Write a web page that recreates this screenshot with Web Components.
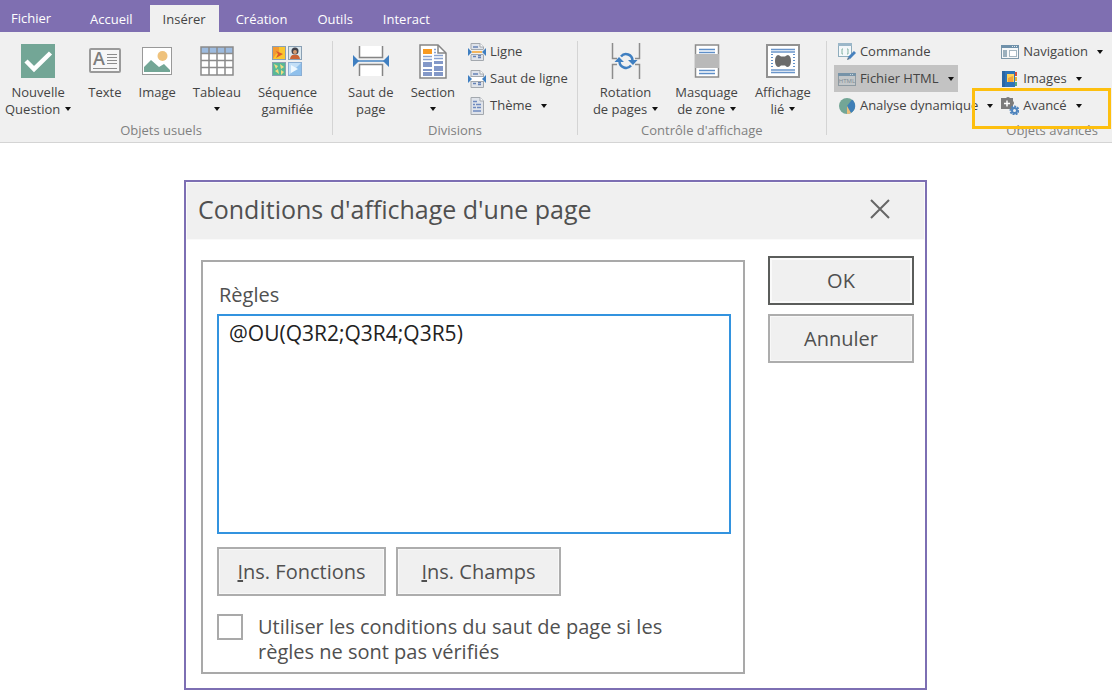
<!DOCTYPE html>
<html lang="fr">
<head>
  <meta charset="utf-8">
  <title>Conditions d'affichage</title>
  <style>
    body {
      margin: 0;
      overflow-x: hidden;
      background: #fff;
      color: #444;
      font: 13px/17px "Open Sans", "Noto Sans", sans-serif;
    }

    main {
      padding: 37px 17px 0 16px;
    }
  </style>
</head>
<body>
  <ribbon-tabs>
    <ribbon-tab file>Fichier</ribbon-tab>
    <ribbon-tab>Accueil</ribbon-tab>
    <ribbon-tab selected>Insérer</ribbon-tab>
    <ribbon-tab>Création</ribbon-tab>
    <ribbon-tab>Outils</ribbon-tab>
    <ribbon-tab>Interact</ribbon-tab>
  </ribbon-tabs>

  <ribbon-bar>
    <ribbon-group label="Objets usuels" first>
      <ribbon-button icon="question" menu>Nouvelle<br>Question</ribbon-button>
      <ribbon-button icon="text">Texte</ribbon-button>
      <ribbon-button icon="image">Image</ribbon-button>
      <ribbon-button icon="table" menu="below">Tableau</ribbon-button>
      <ribbon-button icon="sequence">Séquence<br>gamifiée</ribbon-button>
    </ribbon-group>
    <ribbon-group label="Divisions">
      <ribbon-button icon="page-break">Saut de<br>page</ribbon-button>
      <ribbon-button icon="section" menu="below">Section</ribbon-button>
      <ribbon-stack>
        <ribbon-button small icon="line">Ligne</ribbon-button>
        <ribbon-button small icon="line-break">Saut de ligne</ribbon-button>
        <ribbon-button small icon="theme" menu>Thème</ribbon-button>
      </ribbon-stack>
    </ribbon-group>
    <ribbon-group label="Contrôle d'affichage">
      <ribbon-button icon="rotation" menu>Rotation<br>de pages</ribbon-button>
      <ribbon-button icon="mask" menu>Masquage<br>de zone</ribbon-button>
      <ribbon-button icon="linked" menu>Affichage<br>lié</ribbon-button>
    </ribbon-group>
    <ribbon-group open-end>
      <ribbon-stack>
        <ribbon-button small icon="command">Commande</ribbon-button>
        <ribbon-button small icon="html" menu active>Fichier HTML</ribbon-button>
        <ribbon-button small icon="analysis" menu>Analyse dynamique</ribbon-button>
      </ribbon-stack>
    </ribbon-group>
    <ribbon-group label="Objets avancés" last>
      <ribbon-stack>
        <ribbon-button small icon="navigation" menu>Navigation</ribbon-button>
        <ribbon-button small icon="book" menu>Images</ribbon-button>
        <ribbon-button small icon="advanced" menu framed>Avancé</ribbon-button>
      </ribbon-stack>
    </ribbon-group>
  </ribbon-bar>

  <main>
    <conditions-dialog>Conditions d'affichage d'une page</conditions-dialog>
  </main>

  <script>
    // Page outline with a folded corner, shared by the 18px icons
    const SMALL_PAGE = `
      <path d="M3 .5h9l3.500 3.500v13.500H3z" fill="#dfe3ea" stroke="#a3a8ae"/>
      <path d="M12 .5V4h3.500" fill="#fff" stroke="#a3a8ae"/>`;

    const SPLIT_ARROWS = '<path d="M0 5l4 4-4 4zM18 5l-4 4 4 4z" fill="#3f7fc1"/>';

    const ICONS = {
      question: `<svg width="34" height="34" viewBox="0 0 34 34">
        <path d="M0 0h34v34H0z" fill="#73a696"/>
        <path d="M5 17l8 8L29.500 9" fill="none" stroke="#fff" stroke-width="4.500"/></svg>`,
      text: `<svg width="32" height="26" viewBox="0 0 32 26">
        <rect x="1" y="1" width="30" height="23" rx="1" fill="#f6f6f6" stroke="#9a9a9a" stroke-width="2"/>
        <text x="4" y="17" fill="#7d7d7d" font-size="18" font-weight="600">A</text>
        <path d="M18 6.500h10M18 9.500h10M18 12.500h10M18 15.500h10M4 20.500h24" stroke="#8c8c8c"/></svg>`,
      image: `<svg width="30" height="28" viewBox="0 0 30 28">
        <rect x=".5" y=".5" width="29" height="27" fill="#fff" stroke="#999"/>
        <circle cx="20.500" cy="9" r="5" fill="#efc27c"/>
        <path d="M2 25v-5l7-7 8 7 5-3 6 6v2z" fill="#73a696"/></svg>`,
      table: `<svg width="34" height="30" viewBox="0 0 34 30">
        <path d="M1 1h32v28H1z" fill="#fff"/><path d="M1 1h32v6H1z" fill="#9dbbdf"/>
        <path d="M1 1h32v28H1zM1 7.500h32M1 14.500h32M1 21.500h32M9 1v28M17 1v28M25 1v28" fill="none" stroke="#8b8b8b" stroke-width="1.500"/></svg>`,
      sequence: `<svg width="30" height="30" viewBox="0 0 30 30">
        <rect x=".5" y=".5" width="13" height="13" fill="#fbc62e" stroke="#8aa0b4"/>
        <path d="M1 1h6v6l-3 1-3 5z" fill="#f39a32"/><path d="M4 5l7 3-7 4 2-4z" fill="#dc5a2a"/>
        <rect x="16.500" y=".5" width="13" height="13" fill="#dce8ee" stroke="#8aa0b4"/>
        <circle cx="23" cy="5" r="3.500" fill="#42434b"/><circle cx="23" cy="6" r="2" fill="#d59b70"/>
        <path d="M18 13q1-5 5-4 4-1 5 4z" fill="#ca6434"/>
        <rect x=".5" y="16.500" width="13" height="13" fill="#58b896" stroke="#8aa0b4"/>
        <path d="M2 18l4 2-2 3zM8 18l4 3-3 2zM3 25l3-2 1 5zM9 24l3 2-3 3z" fill="#f1dc82"/>
        <rect x="16.500" y="16.500" width="13" height="13" fill="#c3dff7" stroke="#8aaed4"/>
        <path d="M29 17v12H17z" fill="#8fc0ec"/><path d="M19 19l7 4-7 4z" fill="#eef8ff"/></svg>`,
      'page-break': `<svg width="38" height="32" viewBox="0 0 38 32">
        <path d="M8 1h23v11H8zM8 20h23v11H8z" fill="#fff"/>
        <path d="M7.500 1v11.500h23V1M7.500 31V19.500h23V31" fill="none" stroke="#858585" stroke-width="1.500"/>
        <path d="M6 16h26" stroke="#4484c4" stroke-width="1.500"/>
        <path d="M1 10l6 6-6 6zM37 10l-6 6 6 6z" fill="#3f7fc1"/></svg>`,
      section: `<svg width="28" height="35" viewBox="0 0 28 35">
        <path d="M1 1h18l8 8v25H1z" fill="#fff" stroke="#858585" stroke-width="1.500"/>
        <path d="M19 1v8h8" fill="none" stroke="#858585" stroke-width="1.500"/>
        <path d="M4 5h9v5H4z" fill="#f89a20"/>
        <path d="M4 12.500h9M4 15.500h9M15 5.500h2M15 8.500h2M15 11.500h9M15 14.500h9" stroke="#8ba3cf" stroke-width="1.500"/>
        <path d="M4 18h9v5H4zM4 25h9v2H4zM4 28h9v4H4zM15 17h9v3h-9zM15 22h9v5h-9zM15 28h9v4h-9z" fill="#8398c8"/></svg>`,
      line: `<svg width="18" height="18" viewBox="0 0 18 18">${SMALL_PAGE}
        <path d="M5 4h5M5 13.500h3M10 12.500h3M10 14.500h3" stroke="#6582b6" stroke-width="1.500"/>
        <path d="M2 6h14v6H2z" fill="#f0f0f0"/><path d="M3 6.500h12.500M3 11.500h12.500" stroke="#a3a8ae"/>
        <path d="M4 9h10" stroke="#f3b65f" stroke-width="2"/>${SPLIT_ARROWS}</svg>`,
      'line-break': `<svg width="18" height="18" viewBox="0 0 18 18">${SMALL_PAGE}
        <path d="M5 4h5M5 13.500h3M10 12.500h3M10 14.500h3" stroke="#6582b6" stroke-width="1.500"/>
        <path d="M2 7h14v4H2z" fill="#fff"/><path d="M3 6.500h12.500M3 11.500h12.500" stroke="#a3a8ae"/>${SPLIT_ARROWS}</svg>`,
      theme: `<svg width="18" height="18" viewBox="0 0 18 18">${SMALL_PAGE}
        <path d="M5 4.500h4M5 7.500h2M8 7.500h5M5 10.500h3M9 10.500h4M5 14h8" stroke="#6f8ac0" stroke-width="1.500"/></svg>`,
      rotation: `<svg width="30" height="38" viewBox="0 0 30 38">
        <path d="M1.500 1v15.500H6M28.500 1v15.500H24M1.500 37V22.500H6M28.500 37V22.500H24" fill="none" stroke="#8c8c8c" stroke-width="1.500"/>
        <path d="M10 14.500a6.500 6.500 0 0 1 11.500 4M20 23.500a6.500 6.500 0 0 1-11.500-4" fill="none" stroke="#3f7fc1" stroke-width="2.500"/>
        <path d="M17 18h9.500L22 23zM13 20H3.500L8 15z" fill="#3f7fc1"/></svg>`,
      mask: `<svg width="26" height="34" viewBox="0 0 26 34">
        <rect x="1.500" y="1" width="23" height="32" fill="#fff" stroke="#8c8c8c" stroke-width="1.500"/>
        <path d="M5 5.500h16M5 8.500h16M5 26.500h16M5 29.500h16" stroke="#5f8fc8" stroke-width="1.500"/>
        <path d="M1 10h24v14H1z" fill="#b9b9b9"/></svg>`,
      linked: `<svg width="34" height="34" viewBox="0 0 34 34">
        <rect x="1" y="1" width="32" height="32" fill="#fff" stroke="#929292" stroke-width="2"/>
        <path d="M5 5.500h24M5 8h24M5 26h24M5 28.500h24" stroke="#6a95ca" stroke-width="1.500"/>
        <path d="M6 10v15M28 10v15" stroke="#5f8fc8" stroke-width="2" stroke-dasharray="1 2"/>
        <path d="M12 11q1.500 0 3 1.500h4q1.500-1.500 3-1.500 3 1 3 6t-3 6q-1.500 0-3-1.500h-4q-1.500 1.500-3 1.500-3-1-3-6t3-6z" fill="#6b6b6b"/></svg>`,
      command: `<svg width="18" height="18" viewBox="0 0 18 18">
        <rect x=".5" y=".5" width="13" height="13" fill="#f4f8fa" stroke="#8fadbd"/>
        <path d="M0 0h14v3H0z" fill="#9bb7c9"/>
        <path d="M5 6H4v5h1M9 6h1v5H9" fill="none" stroke="#84b3a4"/>
        <path d="M17 9l-6 6" stroke="#4680bd" stroke-width="3"/><path d="M9 17l1-3 2 2z" fill="#55728d"/></svg>`,
      html: `<svg width="18" height="18" viewBox="0 0 18 18">
        <rect x=".5" y="3.500" width="17" height="12" fill="#c3c7c9" stroke="#8d9aa2"/>
        <path d="M0 3h18v3H0z" fill="#7693a8"/><path d="M12 4.500h4" stroke="#c7d5de" stroke-dasharray="1 1"/>
        <text x="9" y="13" fill="#7d8a92" font-size="6" text-anchor="middle">HTML</text></svg>`,
      analysis: `<svg width="18" height="18" viewBox="0 0 18 18">
        <circle cx="9" cy="9" r="8" fill="#73a696"/>
        <path d="M9 9l5-6.500a8 8 0 0 1-1.500 13.700z" fill="#3f7fb7"/>
        <path d="M9 9l4 7a8 8 0 0 1-4 1z" fill="#edbd79"/></svg>`,
      navigation: `<svg width="18" height="18" viewBox="0 0 18 18">
        <rect x=".5" y="2.500" width="17" height="13" fill="#f6f8f9" stroke="#7e98a9"/>
        <path d="M0 2h18v3H0z" fill="#6f91aa"/><path d="M11 3.500h5" stroke="#e3ecf2" stroke-dasharray="1 1"/>
        <path d="M2 7h4v7H2z" fill="#9bb0bd"/><rect x="8.500" y="7.500" width="7" height="6" fill="#fff" stroke="#a6b7c1"/></svg>`,
      book: `<svg width="18" height="18" viewBox="0 0 18 18">
        <path d="M1 1h13v16H1z" fill="#2e74b8"/><path d="M1 1h3v16H1z" fill="#2a66a3"/>
        <path d="M6 4h7v8H6z" fill="#ffd35a"/><path d="M7 12V8l5-2v6z" fill="#f3a43a"/>
        <path d="M14 2h2v4h-2z" fill="#d94d3a"/><path d="M14 7h2v4h-2z" fill="#e7b23c"/><path d="M14 12h2v4h-2z" fill="#55a87f"/></svg>`,
      advanced: `<svg width="18" height="18" viewBox="0 0 18 18">
        <path d="M0 1h5q2-2 4 0h3v3q2 2 0 4v4H0z" fill="#7b7b7b"/>
        <path d="M6 3.500v6M3 6.500h6" stroke="#fff" stroke-width="1.500"/>
        <circle cx="13.500" cy="13.500" r="4" fill="none" stroke="#4f84bd" stroke-width="2" stroke-dasharray="2 1"/>
        <circle cx="13.500" cy="13.500" r="2.500" fill="#f0f0f0" stroke="#4f84bd" stroke-width="2"/></svg>`
    };

    /**
     * Purple strip that holds the ribbon tabs.
     */
    class RibbonTabs extends HTMLElement {
      constructor () {
        super();
        this.attachShadow({ mode: 'open' }).innerHTML = `
          <style>
            :host {
              display: block;
              background: #7f6fb1;
            }

            nav {
              display: flex;
              align-items: flex-end;
              gap: 4px;
              padding-top: 5px;
            }
          </style>
          <nav role="tablist"><slot></slot></nav>`;
      }
    }

    /**
     * One tab. "file" marks the application menu, "selected" the open tab.
     */
    class RibbonTab extends HTMLElement {
      constructor () {
        super();
        this.attachShadow({ mode: 'open' }).innerHTML = `
          <style>
            :host {
              display: block;
            }

            :host([file]) {
              margin-right: 11px;
            }

            button {
              display: block;
              height: 27px;
              padding: 2px 13px 0;
              border: 0;
              background: none;
              color: #fff;
              font: inherit;
            }

            :host([file]) button {
              padding: 0 11px;
            }

            :host([selected]) button {
              background: #f0f0f0;
              color: #444;
            }
          </style>
          <button type="button" role="tab"><slot></slot></button>`;
        this.shadowRoot.querySelector('button').setAttribute('aria-selected', this.hasAttribute('selected'));
      }
    }

    /**
     * Row of command groups under the tabs.
     */
    class RibbonBar extends HTMLElement {
      constructor () {
        super();
        this.attachShadow({ mode: 'open' }).innerHTML = `
          <style>
            :host {
              display: flex;
              padding: 6px 0 3px;
              border-bottom: 1px solid #d4d4d4;
              background: #f0f0f0;
            }
          </style>
          <slot></slot>`;
      }
    }

    /**
     * Labelled group of commands with a separator on its right.
     */
    class RibbonGroup extends HTMLElement {
      constructor () {
        super();
        this.attachShadow({ mode: 'open' }).innerHTML = `
          <style>
            :host {
              display: flex;
              flex: none;
            }

            :host::after {
              content: "";
              width: 1px;
              margin: 3px 0 4px;
              background: #d4d4d4;
            }

            :host([open-end])::after,
            :host([last])::after {
              display: none;
            }

            .items {
              display: flex;
              gap: 17px;
              height: 81px;
              padding: 0 15px;
            }

            :host([first]) .items {
              padding-left: 5px;
            }

            :host([open-end]) .items {
              padding-right: 10px;
            }

            :host([last]) .items {
              padding: 0 10px 0 8px;
            }

            .label {
              height: 20px;
              padding-top: 3px;
              box-sizing: border-box;
              color: #808080;
              text-align: center;
            }

            :host([first]) .label {
              padding-right: 10px;
            }
          </style>
          <div role="group">
            <div class="items"><slot></slot></div>
            <div class="label"></div>
          </div>`;
        this.shadowRoot.querySelector('.label').textContent = this.getAttribute('label');
      }
    }

    /**
     * Column of small buttons inside a group.
     */
    class RibbonStack extends HTMLElement {
      constructor () {
        super();
        this.attachShadow({ mode: 'open' }).innerHTML = `
          <style>
            :host {
              display: flex;
              flex-direction: column;
              align-items: flex-start;
              margin: 0 -10px 0 -8px;
            }
          </style>
          <slot></slot>`;
      }
    }

    /**
     * Ribbon command: large with the icon on top, or small with the icon on the left.
     */
    class RibbonButton extends HTMLElement {
      constructor () {
        super();
        this.attachShadow({ mode: 'open' }).innerHTML = `
          ${this.getStyles()}
          <button type="button">
            <span class="icon" aria-hidden="true">${ICONS[this.getAttribute('icon')]}</span>
            <span class="text"><slot></slot>${this.hasAttribute('menu') ? '<i class="caret"></i>' : ''}</span>
          </button>`;
      }

      getStyles () {
        return `
        <style>
          :host {
            display: block;
            position: relative;
          }

          button {
            display: flex;
            flex-direction: column;
            align-items: center;
            gap: 3px;
            padding: 3px 0 0;
            border: 0;
            background: none;
            color: inherit;
            font: inherit;
            white-space: nowrap;
          }

          .icon {
            display: flex;
            align-items: center;
            justify-content: center;
            height: 40px;
          }

          svg {
            display: block;
          }

          .caret {
            display: inline-block;
            margin-left: 5px;
            vertical-align: 3px;
            border: 3px solid transparent;
            border-top: 4px solid #111;
            border-bottom: 0;
          }

          :host([menu="below"]) .caret {
            display: block;
            width: 0;
            margin: 6px auto 0;
          }

          :host([small]) button {
            flex-direction: row;
            gap: 4px;
            height: 27px;
            padding: 0 4px;
          }

          :host([small]) .icon {
            width: 18px;
            height: 18px;
          }

          :host([small]) .caret {
            margin-left: 9px;
            vertical-align: 2px;
          }

          :host([active]) button {
            background: #c3c3c3;
          }

          /* call-out frame drawn around the command */
          :host([framed])::after {
            content: "";
            position: absolute;
            inset: -4px -25px -10px;
            border: 3px solid #fdbf0f;
            pointer-events: none;
          }
        </style>`;
      }
    }

    /**
     * Dialog button. "primary" gives the dark border of the default action.
     */
    class PushButton extends HTMLElement {
      constructor () {
        super();
        this.attachShadow({ mode: 'open' }).innerHTML = `
          <style>
            :host {
              display: block;
            }

            button {
              width: 100%;
              height: 49px;
              padding: 0 14px;
              border: 2px solid #adadad;
              background: #f0f0f0;
              box-shadow: inset 0 0 0 1px #f8f8f8;
              color: inherit;
              font: inherit;
            }

            :host([primary]) button {
              border-color: #5b5d5b;
              box-shadow: inset 0 0 0 2px #fafafa;
            }
          </style>
          <button type="button"><slot></slot></button>`;
      }
    }

    /**
     * Dialog that edits the display rules of a page.
     */
    class ConditionsDialog extends HTMLElement {
      constructor () {
        super();
        this.attachShadow({ mode: 'open' }).innerHTML = `
          ${this.getStyles()}
          <header>
            <h1><slot></slot></h1>
            <button class="close" type="button" aria-label="Fermer">
              <svg width="20" height="20" viewBox="0 0 20 20"><path d="M1 1l18 18M19 1L1 19" stroke="#666" stroke-width="2"/></svg>
            </button>
          </header>
          <div class="body">
            <section>
              <label for="rules">Règles</label>
              <textarea id="rules" spellcheck="false">@OU(Q3R2;Q3R4;Q3R5)</textarea>
              <div class="inserts">
                <push-button><u>I</u>ns. Fonctions</push-button>
                <push-button class="fields"><u>I</u>ns. Champs</push-button>
              </div>
              <div class="option">
                <input id="reuse" type="checkbox">
                <label for="reuse">Utiliser les conditions du saut de page si les règles ne sont pas vérifiés</label>
              </div>
            </section>
            <div class="actions">
              <push-button primary>OK</push-button>
              <push-button>Annuler</push-button>
            </div>
          </div>`;
      }

      getStyles () {
        return `
        <style>
          :host {
            display: block;
            box-sizing: border-box;
            max-width: 743px;
            margin: 0 auto;
            border: 2px solid #7d6fb3;
            background: #fff;
            color: #505050;
            font-size: 20px;
            line-height: 25px;
          }

          header {
            display: flex;
            align-items: center;
            justify-content: space-between;
            box-sizing: border-box;
            height: 58px;
            padding: 0 35px 4px 12px;
            box-shadow: inset 0 0 0 1px #fafafa;
            background: #f0f0f0;
          }

          h1 {
            margin: 0;
            font-size: 25px;
            font-weight: normal;
          }

          .close {
            padding: 0;
            border: 0;
            background: none;
          }

          svg {
            display: block;
          }

          .body {
            display: flex;
            align-items: flex-start;
            gap: 23px;
            padding: 16px 11px 14px 15px;
          }

          section {
            flex: 1;
            margin-top: 4px;
            padding: 20px 12px 8px 14px;
            border: 2px solid #a9a9a9;
          }

          section > label {
            display: block;
            padding: 0 2px 7px;
          }

          textarea {
            display: block;
            box-sizing: border-box;
            width: 100%;
            height: 220px;
            padding: 5px 10px;
            border: 2px solid #3393df;
            outline: 0;
            background: #fff;
            color: #222;
            font: inherit;
            font-size: 21px;
            resize: none;
          }

          .inserts {
            display: flex;
            gap: 10px;
            margin: 13px 0 18px;
          }

          .inserts push-button {
            flex: 0 0 169px;
          }

          .inserts .fields {
            flex-basis: 165px;
          }

          .option {
            display: flex;
            align-items: flex-start;
            gap: 15px;
          }

          .option label {
            max-width: 420px;
          }

          input {
            appearance: none;
            flex: none;
            width: 26px;
            height: 26px;
            margin: 0;
            border: 2px solid #a9a9a9;
            background: #fff;
          }

          input:checked {
            background: #3393df;
          }

          .actions {
            display: flex;
            flex: 0 0 146px;
            flex-direction: column;
            gap: 9px;
          }
        </style>`;
      }
    }

    customElements.define('ribbon-tabs', RibbonTabs);
    customElements.define('ribbon-tab', RibbonTab);
    customElements.define('ribbon-bar', RibbonBar);
    customElements.define('ribbon-group', RibbonGroup);
    customElements.define('ribbon-stack', RibbonStack);
    customElements.define('ribbon-button', RibbonButton);
    customElements.define('push-button', PushButton);
    customElements.define('conditions-dialog', ConditionsDialog);
  </script>
</body>
</html>
